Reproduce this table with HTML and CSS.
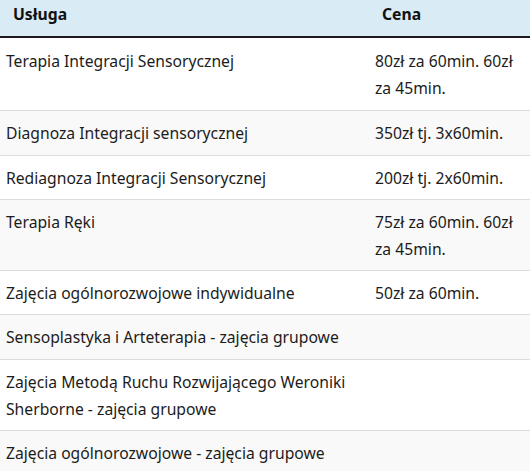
FILE: index.html
```html
<!DOCTYPE html>
<html lang="pl">
<head>
<meta charset="utf-8">
<link rel="stylesheet" href="styles.css">
</head>
<body>
<table class="price-table">
  <thead>
    <tr>
      <th class="col-service">Usługa</th>
      <th class="col-price">Cena</th>
    </tr>
  </thead>
  <tbody>
    <tr><td>Terapia Integracji Sensorycznej</td><td>80zł za 60min. 60zł za 45min.</td></tr>
    <tr><td>Diagnoza Integracji sensorycznej</td><td>350zł tj. 3x60min.</td></tr>
    <tr><td>Rediagnoza Integracji Sensorycznej</td><td>200zł tj. 2x60min.</td></tr>
    <tr><td>Terapia Ręki</td><td>75zł za 60min. 60zł za 45min.</td></tr>
    <tr><td>Zajęcia ogólnorozwojowe indywidualne</td><td>50zł za 60min.</td></tr>
    <tr><td>Sensoplastyka i Arteterapia - zajęcia grupowe</td><td></td></tr>
    <tr><td>Zajęcia Metodą Ruchu Rozwijającego Weroniki Sherborne - zajęcia grupowe</td><td></td></tr>
    <tr><td>Zajęcia ogólnorozwojowe - zajęcia grupowe</td><td></td></tr>
  </tbody>
</table>
</body>
</html>
```

FILE: styles.css
```css
html, body {
  margin: 0;
  padding: 0;
  background: #ffffff;
}
body {
  font-family: "Noto Sans", "Open Sans", sans-serif;
  font-size: 15.7px;
  color: #1c1c1c;
}
.price-table {
  width: 530px;
  border-collapse: collapse;
  table-layout: fixed;
}
.price-table th,
.price-table td {
  box-sizing: border-box;
}
.price-table th {
  background: #d9ebf5;
  font-weight: bold;
  text-align: left;
  line-height: 27px;
  padding: 1px 8px 8px 13px;
  border-bottom: 2px solid #1a1a1a;
  color: #111;
}
.col-service { width: 369px; }
.price-table td {
  line-height: 27.2px;
  padding: 9px 8px 7px 6px;
  vertical-align: top;
  border-top: 1px solid #dcdcdc;
}
.price-table tbody tr:first-child td {
  border-top: none;
  padding-top: 10px;
  padding-bottom: 8px;
}
.price-table tbody tr:nth-child(even) td { background: #f9f9f9; }
```
